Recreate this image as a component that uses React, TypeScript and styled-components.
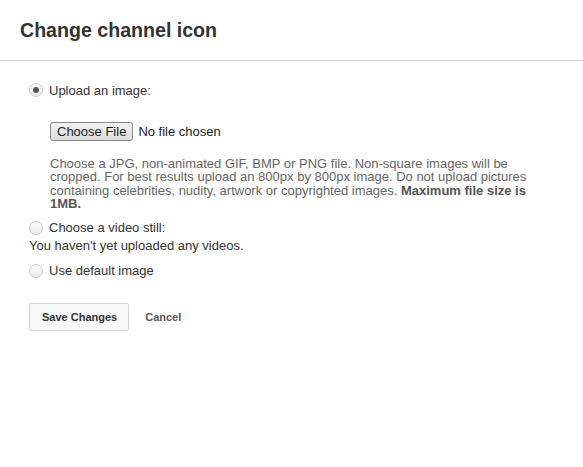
import { FC } from "react";
import styled, { createGlobalStyle } from "styled-components";

const GlobalStyle = createGlobalStyle`
  html, body {
    margin: 0;
    padding: 0;
    background: #fff;
    font-family: "Liberation Sans", Arial, sans-serif;
    font-size: 13px;
    color: #333;
  }
`;

const Page = styled.div`
  width: 583px;
  min-height: 467px;
  background: #fff;
`;

const Header = styled.div`
  height: 60px;
  display: flex;
  align-items: center;
  padding: 0 20px;
  border-bottom: 1px solid #d3d3d3;
`;

const Title = styled.h1`
  margin: 0;
  font-size: 19.6px;
  font-weight: bold;
  color: #333;
`;

const Body = styled.div`
  padding: 21px 29px 0 29px;
`;

const Option = styled.label<{ $top?: number }>`
  display: flex;
  align-items: center;
  gap: 6px;
  height: 16px;
  margin-top: ${(p) => p.$top ?? 0}px;
  color: #333;
  cursor: pointer;
`;

const Radio = styled.input.attrs({ type: "radio" })`
  appearance: none;
  margin: 0;
  width: 14px;
  height: 14px;
  border-radius: 50%;
  border: 1px solid #c9c9c9;
  background: linear-gradient(#fdfdfd, #ececec);
  box-sizing: border-box;
  display: grid;
  place-items: center;

  &:checked::after {
    content: "";
    width: 6px;
    height: 6px;
    border-radius: 50%;
    background: #555;
  }
`;

const Indent = styled.div`
  padding-left: 21px;
`;

const FileRow = styled.div`
  display: flex;
  align-items: center;
  gap: 5px;
  margin-top: 24px;
  height: 19px;
`;

const FileButton = styled.button`
  height: 19px;
  padding: 0 6px;
  font-family: inherit;
  font-size: 13px;
  color: #222;
  background: linear-gradient(#f2f2f2, #dedede);
  border: 1px solid #8a8a8a;
  border-radius: 3px;
`;

const FileName = styled.span`
  color: #222;
`;

const Help = styled.p`
  width: 492px;
  margin: 16px 0 0 0;
  color: #666;
  line-height: 13.4px;

  strong {
    color: #555;
  }
`;

const Note = styled.div`
  margin-top: 2px;
  line-height: 15px;
  color: #333;
`;

const Actions = styled.div`
  display: flex;
  align-items: center;
  gap: 16px;
  margin-top: 24px;
`;

const SaveButton = styled.button`
  height: 28px;
  padding: 0 11px 0 12px;
  font-family: inherit;
  font-size: 11px;
  font-weight: bold;
  color: #333;
  background: #f8f8f8;
  border: 1px solid #d3d3d3;
  border-radius: 2px;
`;

const CancelLink = styled.button`
  padding: 0;
  border: 0;
  background: none;
  font-family: inherit;
  font-size: 11px;
  font-weight: bold;
  color: #555;
`;

const App: FC = () => {
  return (
    <Page>
      <GlobalStyle />
      <Header>
        <Title>Change channel icon</Title>
      </Header>
      <Body>
        <Option>
          <Radio name="icon" defaultChecked />
          Upload an image:
        </Option>
        <Indent>
          <FileRow>
            <FileButton>Choose File</FileButton>
            <FileName>No file chosen</FileName>
          </FileRow>
          <Help>
            Choose a JPG, non-animated GIF, BMP or PNG file. Non-square images will be cropped. For
            best results upload an 800px by 800px image. Do not upload pictures containing
            celebrities, nudity, artwork or copyrighted images.{" "}
            <strong>Maximum file size is 1MB.</strong>
          </Help>
        </Indent>
        <Option $top={9}>
          <Radio name="icon" />
          Choose a video still:
        </Option>
        <Note>You haven't yet uploaded any videos.</Note>
        <Option $top={10}>
          <Radio name="icon" />
          Use default image
        </Option>
        <Actions>
          <SaveButton>Save Changes</SaveButton>
          <CancelLink>Cancel</CancelLink>
        </Actions>
      </Body>
    </Page>
  );
};

export default App;
